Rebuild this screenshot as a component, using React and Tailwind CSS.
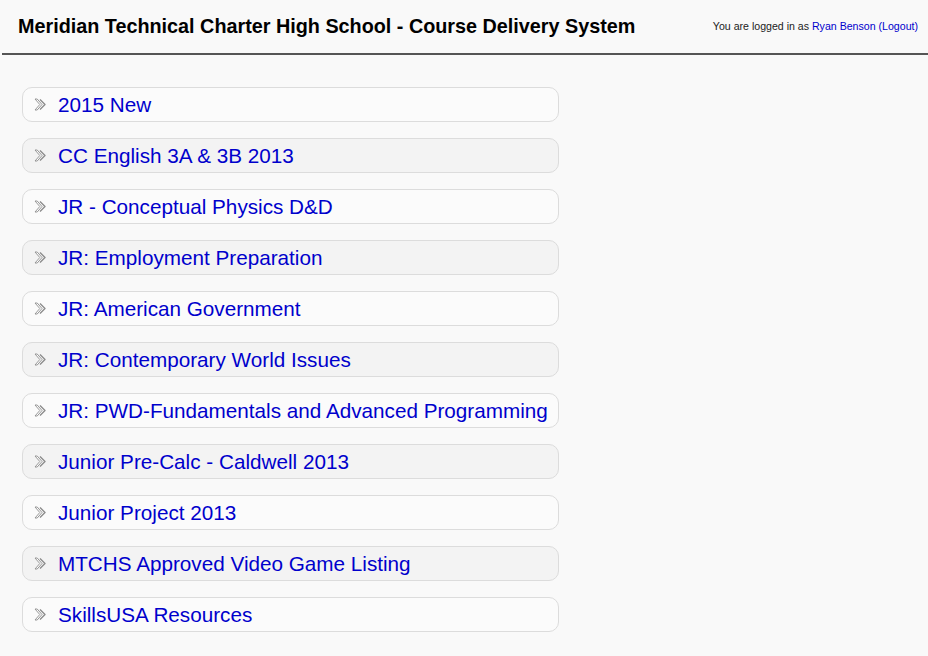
import React from "react";

const courses = [
  "2015 New",
  "CC English 3A & 3B 2013",
  "JR - Conceptual Physics D&D",
  "JR: Employment Preparation",
  "JR: American Government",
  "JR: Contemporary World Issues",
  "JR: PWD-Fundamentals and Advanced Programming",
  "Junior Pre-Calc - Caldwell 2013",
  "Junior Project 2013",
  "MTCHS Approved Video Game Listing",
  "SkillsUSA Resources",
];

function Chevrons() {
  return (
    <svg width="13" height="13" viewBox="0 0 13 13" className="shrink-0">
      <path d="M1 1 L3.2 1 L8 6.5 L3.2 12 L1 12 L5.8 6.5 Z" fill="#fff" stroke="#8c8c8c" strokeWidth="0.9" strokeLinejoin="round" />
      <path d="M6 1.5 L11 6.5 L6 11.5" fill="none" stroke="#8c8c8c" strokeWidth="1.4" strokeLinejoin="round" />
    </svg>
  );
}

export default function App() {
  return (
    <div className="min-h-[656px] w-[928px] bg-[#f9f9f9]" style={{ fontFamily: '"Liberation Sans", Arial, sans-serif' }}>
      <header className="flex h-[53px] items-center justify-between pl-[18px] pr-[10px] pt-[1px]">
        <h1 className="text-[19.8px] font-bold text-black">Meridian Technical Charter High School - Course Delivery System</h1>
        <div className="text-[10.6px] text-[#222]">
          You are logged in as <span className="text-[#0000cc]">Ryan Benson</span>{" "}
          <span className="text-[#0000cc]">(Logout)</span>
        </div>
      </header>
      <div className="ml-[2px] h-[2px] bg-[#555]" />
      <ul className="flex flex-col gap-[16px] pl-[22px] pt-[32px] pb-[24px]">
        {courses.map((c, i) => (
          <li
            key={c}
            className={`flex h-[35px] w-[537px] items-center gap-[11px] rounded-[10px] border border-[#dcdcdc] pl-[11px] ${
              i % 2 === 0 ? "bg-[#fbfbfb]" : "bg-[#f3f3f3]"
            }`}
          >
            <Chevrons />
            <span className="whitespace-nowrap text-[20.7px] text-[#0000cc]">{c}</span>
          </li>
        ))}
      </ul>
    </div>
  );
}
